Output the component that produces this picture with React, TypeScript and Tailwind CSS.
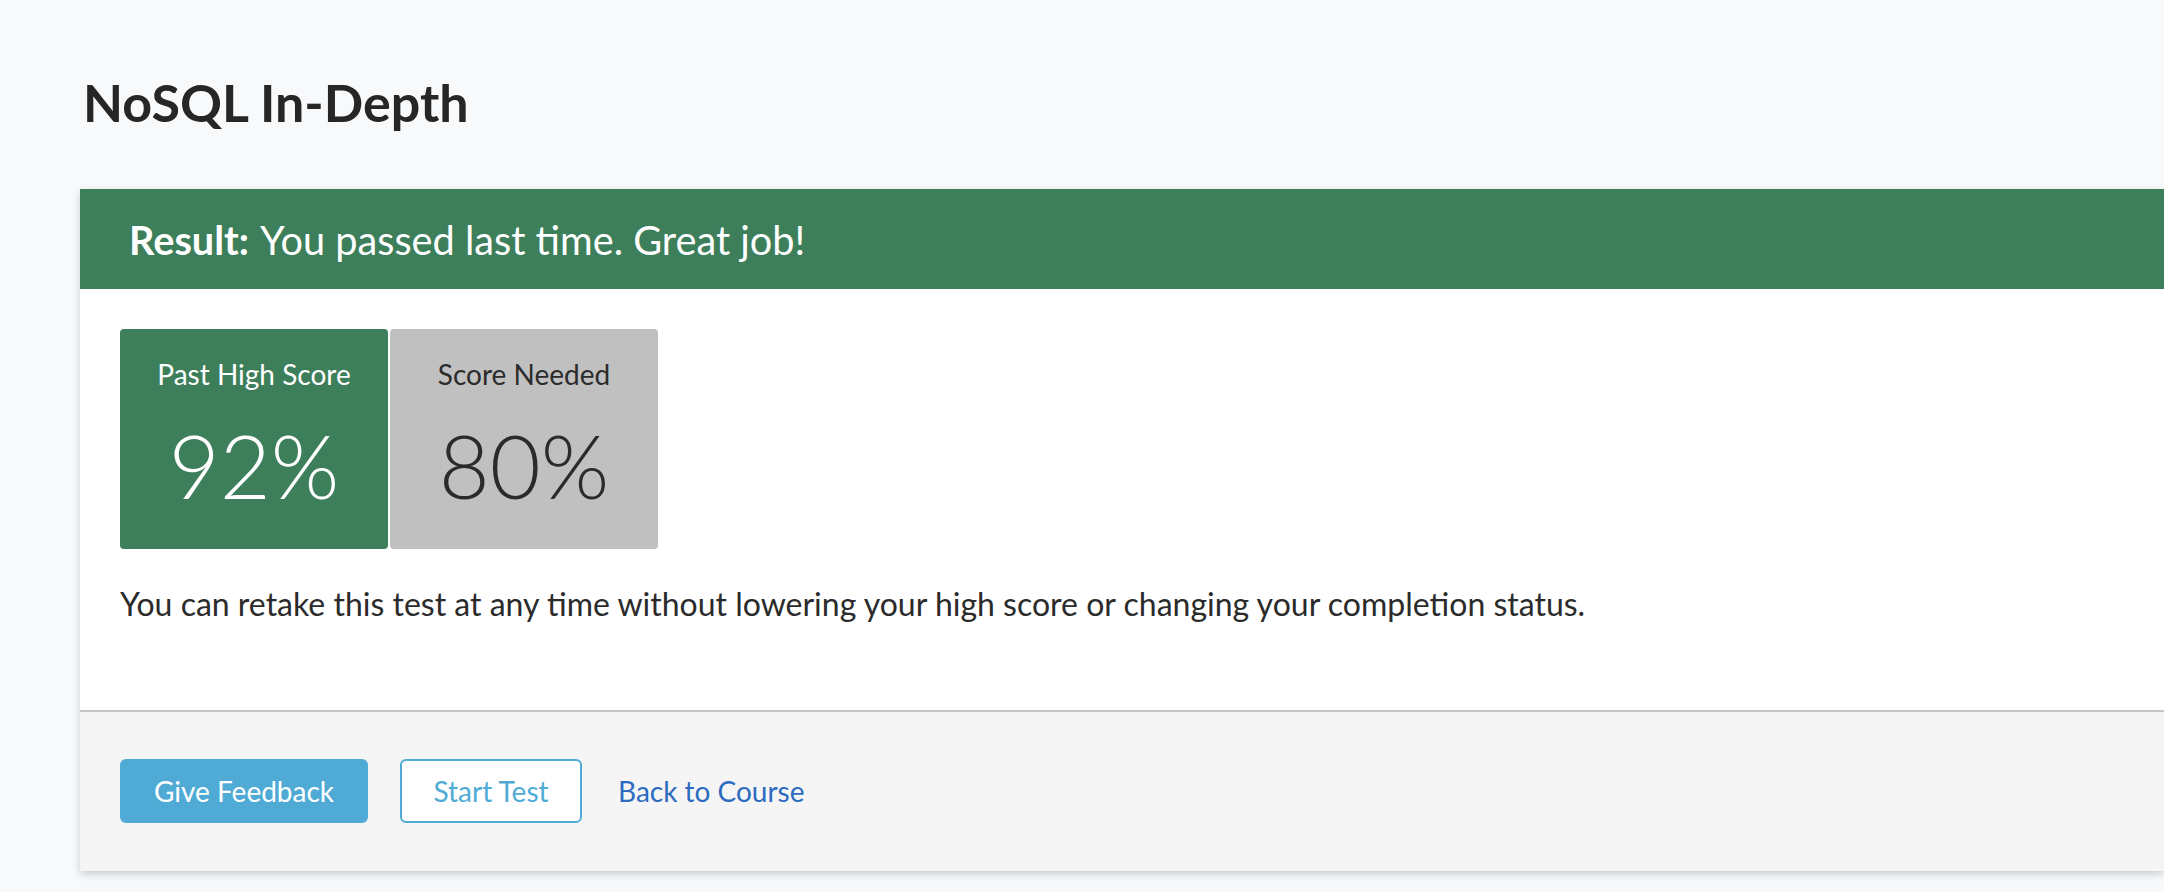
import React from 'react';

const ScoreBox: React.FC<{ label: string; value: string; tone: 'green' | 'gray' }> = ({ label, value, tone }) => (
  <div
    className={
      tone === 'green'
        ? 'flex h-[220px] w-[268px] flex-col items-center rounded-[4px] bg-[#3d7e5b] pt-[29px] text-white'
        : 'flex h-[220px] w-[268px] flex-col items-center rounded-[4px] bg-[#c0c0c0] pt-[29px] text-[#2b2b2b]'
    }
  >
    <div className="text-[28px] leading-[1.2]">{label}</div>
    <div className="mt-[29px] text-[88px] font-light leading-none">{value}</div>
  </div>
);

export default function App() {
  return (
    <div className="h-[892px] overflow-hidden bg-[#f8f9fb] font-['Lato','Open_Sans',sans-serif] text-[#2b2b2b]">
      <h1 className="pl-[83px] pt-[71px] text-[52px] font-bold leading-[1.2] text-[#262626]">NoSQL In-Depth</h1>

      <div className="mt-[56px] flex pl-[80px]">
        <div className="flex-1 bg-white shadow-[0_3px_8px_rgba(0,0,0,0.18)]">
          <div className="flex h-[100px] items-center bg-[#3d7e5b] pl-[49px] text-[39.7px] leading-[1.2] text-white">
            <span className="font-bold">Result:</span>
            <span className="ml-[11px]">You passed last time. Great job!</span>
          </div>

          <div className="px-[40px] pt-[40px] pb-[86px]">
            <div className="flex gap-[2px]">
              <ScoreBox label="Past High Score" value="92%" tone="green" />
              <ScoreBox label="Score Needed" value="80%" tone="gray" />
            </div>
            <p className="mt-[36px] text-[32px] leading-[1.2] text-[#2b2b2b]">
              You can retake this test at any time without lowering your high score or changing your completion status.
            </p>
          </div>

          <div className="flex items-center gap-[32px] border-t-2 border-[#c4c4c4] bg-[#f5f5f5] px-[40px] pt-[47px] pb-[48px]">
            <button className="h-[64px] w-[248px] rounded-[6px] bg-[#4fabd5] text-[28px] text-white">Give Feedback</button>
            <button className="h-[64px] w-[182px] rounded-[6px] border-2 border-[#4fabd5] bg-white text-[28px] text-[#4fabd5]">
              Start Test
            </button>
            <a className="ml-[4px] text-[28px] text-[#2c6bc0]" href="#">
              Back to Course
            </a>
          </div>
        </div>
      </div>
    </div>
  );
}
